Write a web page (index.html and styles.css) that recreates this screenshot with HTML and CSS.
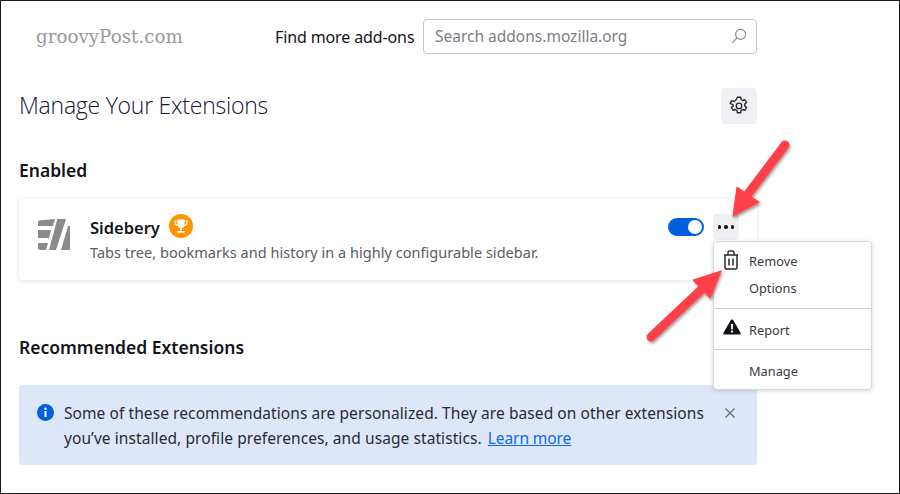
FILE: index.html
```html
<!DOCTYPE html>
<html lang="en">
<head>
<meta charset="utf-8">
<title>Manage Your Extensions</title>
<link rel="stylesheet" href="styles.css">
</head>
<body>
<div class="window">
  <header class="topbar">
    <span class="wordmark">groovyPost.com</span>
    <span class="find">Find more add-ons</span>
    <div class="search">
      <span class="placeholder">Search addons.mozilla.org</span>
      <svg class="search-icon" viewBox="0 0 16 16" width="16" height="16"><circle cx="9.6" cy="6.4" r="5" fill="none" stroke="#8f8f9d" stroke-width="1.2"/><path d="M6 10 1.2 14.8" stroke="#8f8f9d" stroke-width="1.2" fill="none"/></svg>
    </div>
  </header>

  <div class="title-row">
    <h1>Manage Your Extensions</h1>
    <button class="gear">
      <svg viewBox="0 0 16 16" width="20" height="20" fill="none" stroke="#2b2a33" stroke-width="1.1" stroke-linejoin="round"><path d="M6.700 1h2.600l.4 1.900 1.200.7 1.900-.6 1.300 2.200-1.500 1.300v1.400l1.500 1.300-1.300 2.200-1.900-.6-1.200.7-.4 1.900H6.700l-.4-1.900-1.200-.7-1.900.6-1.300-2.200 1.500-1.300V7.200L.9 5.900l1.300-2.200 1.900.6 1.200-.7z"/><circle cx="8" cy="7.900" r="2.200"/></svg>
    </button>
  </div>

  <h2 class="enabled">Enabled</h2>
  <section class="card">
    <svg class="ext-icon" viewBox="0 0 32 32" width="32" height="32" fill="#8a8a8a"><path d="M1 1.500 17 0l-2 7H0V2.500z"/><path d="M0 11h13l-2 8H0z"/><path d="M0 24h10l-2 7H2q-2 0-2-2z"/><path d="M19 1q0-1 1-1h8L18 31h-7z"/><path d="M30 7h2v24h-9z"/></svg>
    <div class="ext-text">
      <div class="ext-name-row">
        <span class="ext-name">Sidebery</span>
        <span class="badge">
          <svg viewBox="0 0 24 24" width="24" height="24"><circle cx="12" cy="12" r="12" fill="#ff9400"/><path d="M8.500 5.500h7v5a3.500 3.500 0 0 1-7 0zM11 14h2v2.500h-2zM8.500 17h7v1.800h-7z" fill="#fff"/><path d="M8.500 7H6v1.500a3 3 0 0 0 3 3M15.500 7H18v1.500a3 3 0 0 1-3 3" fill="none" stroke="#fff" stroke-width="1.200"/></svg>
        </span>
      </div>
      <p class="ext-desc">Tabs tree, bookmarks and history in a highly configurable sidebar.</p>
    </div>
    <div class="ext-controls">
      <span class="toggle"><span class="knob"></span></span>
      <button class="more"><i></i><i></i><i></i></button>
    </div>
  </section>

  <h2 class="recommended">Recommended Extensions</h2>
  <section class="banner">
    <svg class="info" viewBox="0 0 17 17" width="17" height="17"><circle cx="8.500" cy="8.500" r="8.500" fill="#0060df"/><rect x="7.500" y="7" width="2" height="6" fill="#fff"/><circle cx="8.500" cy="4.800" r="1.200" fill="#fff"/></svg>
    <p class="banner-text">Some of these recommendations are personalized. They are based on other extensions you’ve installed, profile preferences, and usage statistics. <a href="#">Learn more</a></p>
    <svg class="close" viewBox="0 0 10 10" width="10" height="10"><path d="M.5.5l9 9M9.500.5l-9 9" stroke="#6a6a75" stroke-width="1.200"/></svg>
  </section>
  <div class="next-card"></div>
</div>

<div class="menu">
  <div class="menu-group">
    <div class="menu-item">
      <svg viewBox="0 0 16 20" width="16" height="20" fill="none" stroke="#2b2a33" stroke-width="1.500"><path d="M2 5h12v12.500a1.500 1.500 0 0 1-1.500 1.500h-9A1.500 1.500 0 0 1 2 17.500zM1 5h14M5 5V2.500A1.500 1.500 0 0 1 6.500 1h3A1.500 1.500 0 0 1 11 2.500V5M6 8.500v7M10 8.500v7"/></svg>
      <span>Remove</span>
    </div>
    <div class="menu-item"><span>Options</span></div>
  </div>
  <div class="menu-group">
    <div class="menu-item">
      <svg viewBox="0 0 18 16" width="18" height="16"><path d="M9 .5q1 0 1.500 1l7 12.300q.6 1.700-1 1.700h-15q-1.600 0-1-1.700l7-12.300Q8 .5 9 .5z" fill="#15141a"/><rect x="8.100" y="5" width="1.800" height="5.500" fill="#fff"/><circle cx="9" cy="12.600" r="1.100" fill="#fff"/></svg>
      <span>Report</span>
    </div>
  </div>
  <div class="menu-group">
    <div class="menu-item"><span>Manage</span></div>
  </div>
</div>

<svg class="arrows" viewBox="0 0 900 494" width="900" height="494">
  <defs><filter id="sh" x="-30%" y="-30%" width="160%" height="160%"><feDropShadow dx="1" dy="2" stdDeviation="1.800" flood-color="#000" flood-opacity=".4"/></filter></defs>
  <g filter="url(#sh)" fill="#ff4048" stroke="#ff4048" stroke-linecap="round">
    <path d="M785 145 748 194" stroke-width="9" fill="none"/>
    <path d="M733 216 737 187 759 202z" stroke-width="1"/>
    <path d="M651 337 702 289" stroke-width="9" fill="none"/>
    <path d="M721 271 693 280 710 298z" stroke-width="1"/>
  </g>
</svg>
</body>
</html>
```
FILE: styles.css
```css
* { box-sizing: border-box; }
html, body { margin: 0; padding: 0; }
body {
  position: relative;
  width: 900px;
  height: 494px;
  overflow: hidden;
  background: #fff;
  color: #15141a;
  font-family: "Noto Sans", "Open Sans", sans-serif;
}
.window {
  width: 900px;
  height: 494px;
  border: 1px solid #1c1c1c;
  padding: 18px 142px 0 18px;
  overflow: hidden;
}
.topbar {
  display: flex;
  align-items: center;
  height: 35px;
}
.wordmark {
  margin-left: 17px;
  width: 239px;
  font-family: "DejaVu Serif", serif;
  font-size: 18.300px;
  color: #999;
}
.find { width: 148px; font-size: 16px; letter-spacing: -.12px; }
.search {
  flex: 1;
  height: 35px;
  border: 1px solid #c4c4c8;
  border-radius: 4px;
  display: flex;
  align-items: center;
  justify-content: space-between;
  padding: 0 9px 2px 11px;
}
.placeholder { font-size: 15.500px; color: #7d7d87; }
.title-row {
  display: flex;
  justify-content: space-between;
  align-items: center;
  height: 36px;
  margin-top: 34px;
}
h1 { margin: 0 0 2px; font-family: "Open Sans", sans-serif; font-weight: 300; font-size: 23px; color: #20123a; letter-spacing: -.24px; }
.gear {
  width: 36px;
  height: 36px;
  border: 0;
  border-radius: 4px;
  background: #f0f0f4;
  padding: 0;
  display: flex;
  align-items: center;
  justify-content: center;
}
h2 { margin: 0; font-size: 17.500px; font-weight: 600; line-height: 24px; }
.enabled { margin-top: 34px; }
.card {
  margin-top: 17px;
  height: 81px;
  border-radius: 4px;
  box-shadow: 0 1px 4px rgba(58,57,68,.14);
  display: flex;
  padding: 20px 18px 0 19px;
}
.ext-icon { flex: none; }
.ext-text { margin-left: 20px; flex: 1; margin-top: -6px; }
.ext-name-row { display: flex; align-items: center; height: 28px; gap: 9px; }
.ext-name { font-size: 16.500px; font-weight: 600; }
.badge { display: block; height: 24px; margin-top: -2px; }
.ext-desc { margin: 0; font-size: 14.500px; color: #5b5b66; line-height: 22px; letter-spacing: .03px; }
.ext-controls { display: flex; align-items: center; gap: 9px; height: 26px; margin-top: -5px; }
.toggle {
  width: 36px;
  height: 18px;
  border-radius: 9px;
  background: #0060df;
  display: flex;
  justify-content: flex-end;
  align-items: center;
  padding-right: 2px;
}
.knob { width: 14px; height: 14px; border-radius: 50%; background: #fff; }
.more {
  width: 26px;
  height: 26px;
  border: 0;
  border-radius: 4px;
  background: #f0f0f4;
  padding: 0;
  display: flex;
  align-items: center;
  justify-content: center;
  gap: 3px;
}
.more i { width: 3.500px; height: 3.500px; border-radius: 50%; background: #15141a; }
.recommended { margin-top: 55px; }
.banner {
  margin-top: 26px;
  height: 80px;
  border-radius: 4px;
  background: #dde7f9;
  display: flex;
  padding: 19px 22px 0 18px;
}
.info { flex: none; }
.banner-text { margin: -3px 0 0 10px; flex: 1; font-size: 15.500px; line-height: 25px; color: #2b2a33; letter-spacing: .08px; }
.banner-text a { color: #0a6ae6; margin-left: 2px; letter-spacing: -.1px; }
.close { flex: none; margin: 4px 0 0 20px; }
.next-card { margin-top: 25px; height: 40px; border-radius: 4px; box-shadow: 0 1px 4px rgba(58,57,68,.14); }
.menu {
  position: absolute;
  left: 713px;
  top: 241px;
  width: 159px;
  height: 149px;
  background: #fff;
  border: 1px solid #d8d8dc;
  border-radius: 4px;
  box-shadow: 0 1px 4px rgba(58,57,68,.2);
  font-size: 12.800px;
  color: #3a3944;
  padding-top: 5px;
}
.menu-group { padding-bottom: 6px; margin-bottom: 7px; border-bottom: 1px solid #cfcfd3; }
.menu-group:first-child { padding-bottom: 7px; }
.menu-group:last-child { border-bottom: 0; }
.menu-item {
  position: relative;
  height: 27px;
  padding-left: 35px;
  display: flex;
  align-items: center;
}
.menu-item svg { position: absolute; left: 9px; top: 3px; }
.arrows { position: absolute; left: 0; top: 0; pointer-events: none; }
```
